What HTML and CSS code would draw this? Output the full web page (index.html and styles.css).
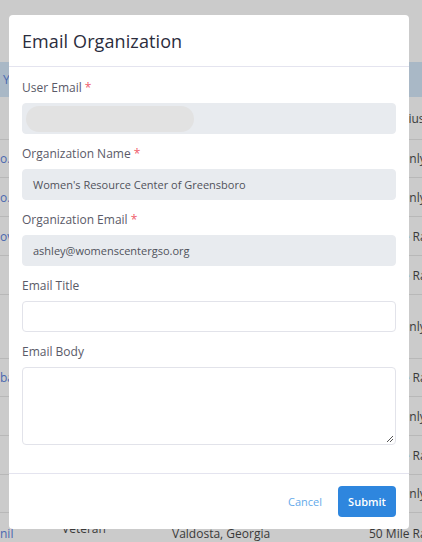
FILE: index.html
```html
<!DOCTYPE html>
<html>
<head>
<meta charset="utf-8">
<link rel="stylesheet" href="styles.css">
</head>
<body>
<div class="page">
  <div class="topbar"></div>
  <div class="table">
    <div class="row head"><span class="c1 link">Y</span><span class="c2"></span><span class="c3"></span><span class="c4"></span></div>
    <div class="row r43"><span class="c1"></span><span class="c2"></span><span class="c3"></span><span class="c4 shift">Radius</span></div>
    <div class="row r38"><span class="c1 link">o.org</span><span class="c2"></span><span class="c3"></span><span class="c4 shift2">Only</span></div>
    <div class="row r39"><span class="c1 link">o.org</span><span class="c2"></span><span class="c3"></span><span class="c4 shift2">Only</span></div>
    <div class="row r39"><span class="c1 link">ov.org</span><span class="c2"></span><span class="c3"></span><span class="c4">50 Mile Radius</span></div>
    <div class="row r39"><span class="c1"></span><span class="c2"></span><span class="c3"></span><span class="c4">50 Mile Radius</span></div>
    <div class="row r64"><span class="c1"></span><span class="c2"></span><span class="c3"></span><span class="c4 shift2">Only</span></div>
    <div class="row r38"><span class="c1 link">ba.org</span><span class="c2"></span><span class="c3"></span><span class="c4">50 Mile Radius</span></div>
    <div class="row r39"><span class="c1"></span><span class="c2"></span><span class="c3"></span><span class="c4 shift2">Only</span></div>
    <div class="row r39"><span class="c1"></span><span class="c2"></span><span class="c3"></span><span class="c4">50 Mile Radius</span></div>
    <div class="row r38"><span class="c1"></span><span class="c2"></span><span class="c3"></span><span class="c4 shift2">Only</span></div>
    <div class="row r40"><span class="c1 link">nil</span><span class="c2 up">Veteran</span><span class="c3">Valdosta, Georgia</span><span class="c4">50 Mile Radius</span></div>
  </div>
</div>

<div class="modal">
  <div class="modal-header">
    <h2 class="modal-title">Email Organization</h2>
  </div>
  <div class="modal-body">
    <div class="group">
      <label class="label">User Email <span class="req">*</span></label>
      <div class="input disabled"><span class="skeleton"></span></div>
    </div>
    <div class="group">
      <label class="label">Organization Name <span class="req">*</span></label>
      <div class="input disabled">Women's Resource Center of Greensboro</div>
    </div>
    <div class="group">
      <label class="label">Organization Email <span class="req">*</span></label>
      <div class="input disabled">ashley@womenscentergso.org</div>
    </div>
    <div class="group">
      <label class="label">Email Title</label>
      <div class="input"></div>
    </div>
    <div class="group">
      <label class="label">Email Body</label>
      <div class="input textarea">
        <svg class="grip" width="9" height="9" viewBox="0 0 9 9"><path d="M8 2 L2 8 M8 5 L5 8" stroke="#555" stroke-width="1" fill="none"/></svg>
      </div>
    </div>
  </div>
  <div class="modal-footer">
    <button class="btn-cancel">Cancel</button>
    <button class="btn-submit">Submit</button>
  </div>
</div>
</body>
</html>
```
FILE: styles.css
```css
* { box-sizing: border-box; }
html, body { margin: 0; padding: 0; }
body {
  width: 422px;
  height: 542px;
  overflow: hidden;
  background: #cbcbcb;
  font-family: "Open Sans", "Noto Sans", sans-serif;
  color: #333;
}
.page { width: 422px; }
.topbar { height: 62px; }
.table { width: 422px; }
.row {
  display: grid;
  grid-template-columns: 55px 110px 197px 60px;
  align-items: center;
  border-bottom: 1px solid #b8b8b8;
  font-size: 12px;
  color: #3a3a3a;
  white-space: nowrap;
  overflow: hidden;
}
.row > span { overflow: hidden; padding-left: 7px; }
.row > .c1 { padding-left: 0; }
.row.head { height: 35px; background: #a9b8c6; border-bottom: none; }
.r43 { height: 43px; }
.r38 { height: 38px; }
.r39 { height: 39px; }
.r40 { height: 40px; border-bottom: none; }
.r64 { height: 64px; }
.link { color: #4a68b0; }
.head .link { color: #4a68b0; padding-left: 3px; }
.c4 { overflow: visible; }
.shift { padding-left: 25px !important; }
.shift2 { padding-left: 38px !important; }
.up { margin-top: -10px; }

.modal {
  position: fixed;
  left: 9px;
  top: 15px;
  width: 400px;
  height: 514px;
  background: #fff;
  border-radius: 4px;
  display: flex;
  flex-direction: column;
}
.modal-header {
  height: 52px;
  border-bottom: 1px solid #e4e4ef;
  padding: 0 13px;
  display: flex;
  align-items: center;
}
.modal-title {
  margin: 0;
  font-size: 18px;
  font-weight: 500;
  color: #2b2d3d;
  letter-spacing: 0.1px;
}
.modal-body {
  padding: 12px 13px 16px;
  flex: 1;
}
.group { margin-bottom: 11px; }
.group:last-child { margin-bottom: 0; }
.label {
  display: block;
  height: 18px;
  line-height: 18px;
  margin-bottom: 6px;
  font-size: 12px;
  color: #5a5a68;
}
.req { color: #ef5b6a; }
.input {
  height: 31px;
  border: 1px solid #e2e3ea;
  border-radius: 4px;
  background: #fff;
  font-size: 11px;
  color: #50525b;
  padding: 0 10px;
  display: flex;
  align-items: center;
  position: relative;
}
.input.disabled { background: #e8ebef; border-color: #e8ebef; }
.skeleton {
  display: block;
  width: 168px;
  height: 26px;
  margin-left: -7px;
  border-radius: 13px;
  background: #e2e2e2;
}
.textarea { height: 78px; }
.grip { position: absolute; right: 1px; bottom: 1px; }
.modal-footer {
  border-top: 1px solid #e4e4ef;
  padding: 12px 13px 12px;
  display: flex;
  justify-content: flex-end;
  align-items: center;
  gap: 16px;
}
.btn-cancel {
  background: none;
  border: none;
  padding: 0;
  font-family: inherit;
  font-size: 11px;
  color: #64aaea;
}
.btn-submit {
  background: #2e86de;
  border: none;
  border-radius: 4px;
  width: 58px;
  height: 31px;
  font-family: inherit;
  font-size: 11px;
  font-weight: 600;
  color: #fff;
}
```
